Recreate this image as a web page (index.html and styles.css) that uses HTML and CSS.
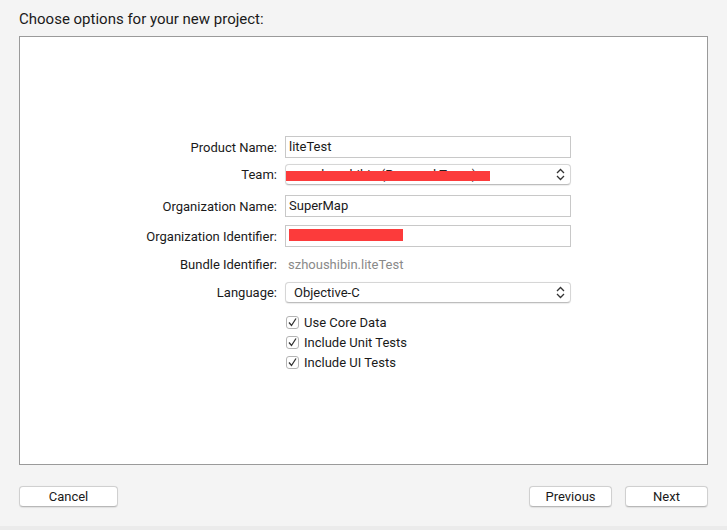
FILE: index.html
```html
<!DOCTYPE html>
<html>
<head>
<meta charset="utf-8">
<link rel="stylesheet" href="styles.css">
</head>
<body>
<div class="page">
  <div class="title">Choose options for your new project:</div>
  <div class="panel">
    <div class="form">
      <div class="row r1">
        <div class="label">Product Name:</div>
        <div class="field text">liteTest</div>
      </div>
      <div class="row r2">
        <div class="label">Team:</div>
        <div class="field popup">
          <span class="hidden-text">szhoushibin (Personal Team)</span>
          <span class="redact redact-team"></span>
          <svg class="arrows" width="9" height="13" viewBox="0 0 9 13"><path d="M1 5 L4.5 1.5 L8 5 M1 8 L4.5 11.5 L8 8" fill="none" stroke="#333" stroke-width="1.3"/></svg>
        </div>
      </div>
      <div class="row r3">
        <div class="label">Organization Name:</div>
        <div class="field text">SuperMap</div>
      </div>
      <div class="row r4">
        <div class="label">Organization Identifier:</div>
        <div class="field text"><span class="redact redact-org"></span></div>
      </div>
      <div class="row r5">
        <div class="label">Bundle Identifier:</div>
        <div class="value">szhoushibin.liteTest</div>
      </div>
      <div class="row r6">
        <div class="label">Language:</div>
        <div class="field popup lang">Objective-C
          <svg class="arrows" width="9" height="13" viewBox="0 0 9 13"><path d="M1 5 L4.5 1.5 L8 5 M1 8 L4.5 11.5 L8 8" fill="none" stroke="#333" stroke-width="1.3"/></svg>
        </div>
      </div>
      <div class="checks">
        <div class="check"><span class="box"><svg width="11" height="11" viewBox="0 0 11 11"><path d="M2 5.5 L4.5 8.5 L9 1.5" fill="none" stroke="#333" stroke-width="1.3"/></svg></span>Use Core Data</div>
        <div class="check"><span class="box"><svg width="11" height="11" viewBox="0 0 11 11"><path d="M2 5.5 L4.5 8.5 L9 1.5" fill="none" stroke="#333" stroke-width="1.3"/></svg></span>Include Unit Tests</div>
        <div class="check"><span class="box"><svg width="11" height="11" viewBox="0 0 11 11"><path d="M2 5.5 L4.5 8.5 L9 1.5" fill="none" stroke="#333" stroke-width="1.3"/></svg></span>Include UI Tests</div>
      </div>
    </div>
  </div>
  <div class="footer">
    <div class="btn cancel">Cancel</div>
    <div class="right">
      <div class="btn nav">Previous</div>
      <div class="btn nav">Next</div>
    </div>
  </div>
</div>
<div class="strip"></div>
</body>
</html>
```
FILE: styles.css
```css
html, body {
  margin: 0;
  padding: 0;
  background: #f4f4f4;
  width: 727px;
  height: 530px;
  overflow: hidden;
  font-family: "Roboto", "Inter", "Liberation Sans", sans-serif;
  font-size: 13px;
  color: #1a1a1a;
}
.page {
  height: 526px;
  padding: 0 19px;
  box-sizing: border-box;
}
.title {
  padding-top: 11px;
  height: 36px;
  line-height: 17px;
  font-size: 15px;
  box-sizing: border-box;
}
.panel {
  height: 429px;
  border: 1px solid #9a9a9a;
  background: #fff;
  box-sizing: border-box;
  padding-top: 99px;
}
.form {
  display: flex;
  flex-direction: column;
}
.row {
  display: flex;
  align-items: center;
  gap: 8px;
}
.label {
  width: 257px;
  text-align: right;
  flex: none;
}
.field {
  width: 286px;
  box-sizing: border-box;
  position: relative;
  background: #fff;
}
.text {
  height: 22px;
  border: 1px solid #c8c8c8;
  padding-left: 3px;
  line-height: 20px;
}
.popup {
  height: 21px;
  border: 1px solid #d6d6d6;
  border-bottom-color: #bdbdbd;
  border-radius: 4px;
  box-shadow: 0 0.5px 1px rgba(0,0,0,0.08);
  padding-left: 8px;
  line-height: 19px;
  overflow: hidden;
}
.lang { padding-left: 8px; }
.arrows {
  position: absolute;
  right: 5px;
  top: 3px;
}
.hidden-text {
  color: #222;
  position: absolute;
  left: 22px;
  top: 0;
}
.redact {
  position: absolute;
  background: #fc3b3b;
}
.redact-team {
  left: -1px;
  top: 6px;
  width: 205px;
  height: 10px;
}
.redact-org {
  left: 3px;
  top: 3px;
  width: 114px;
  height: 12px;
}
.r1 { height: 22px; }
.r2 { height: 21px; margin-top: 6px; }
.r3 { height: 22px; margin-top: 10px; }
.r4 { height: 22px; margin-top: 8px; }
.r5 { height: 20px; margin-top: 7px; }
.r6 { height: 21px; margin-top: 8px; }
.value {
  color: #8a8a8a;
  padding-left: 3px;
}
.checks {
  margin-top: 9px;
  padding-left: 266px;
  display: flex;
  flex-direction: column;
}
.check {
  height: 20px;
  display: flex;
  align-items: center;
  gap: 5px;
}
.box {
  width: 13px;
  height: 13px;
  box-sizing: border-box;
  border: 1px solid #b4b4b4;
  border-radius: 3px;
  background: #fff;
  display: flex;
  align-items: center;
  justify-content: center;
}
.footer {
  margin-top: 21px;
  display: flex;
  justify-content: space-between;
}
.right {
  display: flex;
  gap: 13px;
}
.btn {
  height: 21px;
  box-sizing: border-box;
  background: #fff;
  border: 1px solid #d0d0d0;
  border-bottom-color: #b8b8b8;
  border-radius: 4px;
  text-align: center;
  line-height: 19px;
  box-shadow: 0 0.5px 1px rgba(0,0,0,0.08);
}
.cancel { width: 99px; }
.nav { width: 83px; }
.strip {
  height: 4px;
  background: #ebebeb;
}
```
